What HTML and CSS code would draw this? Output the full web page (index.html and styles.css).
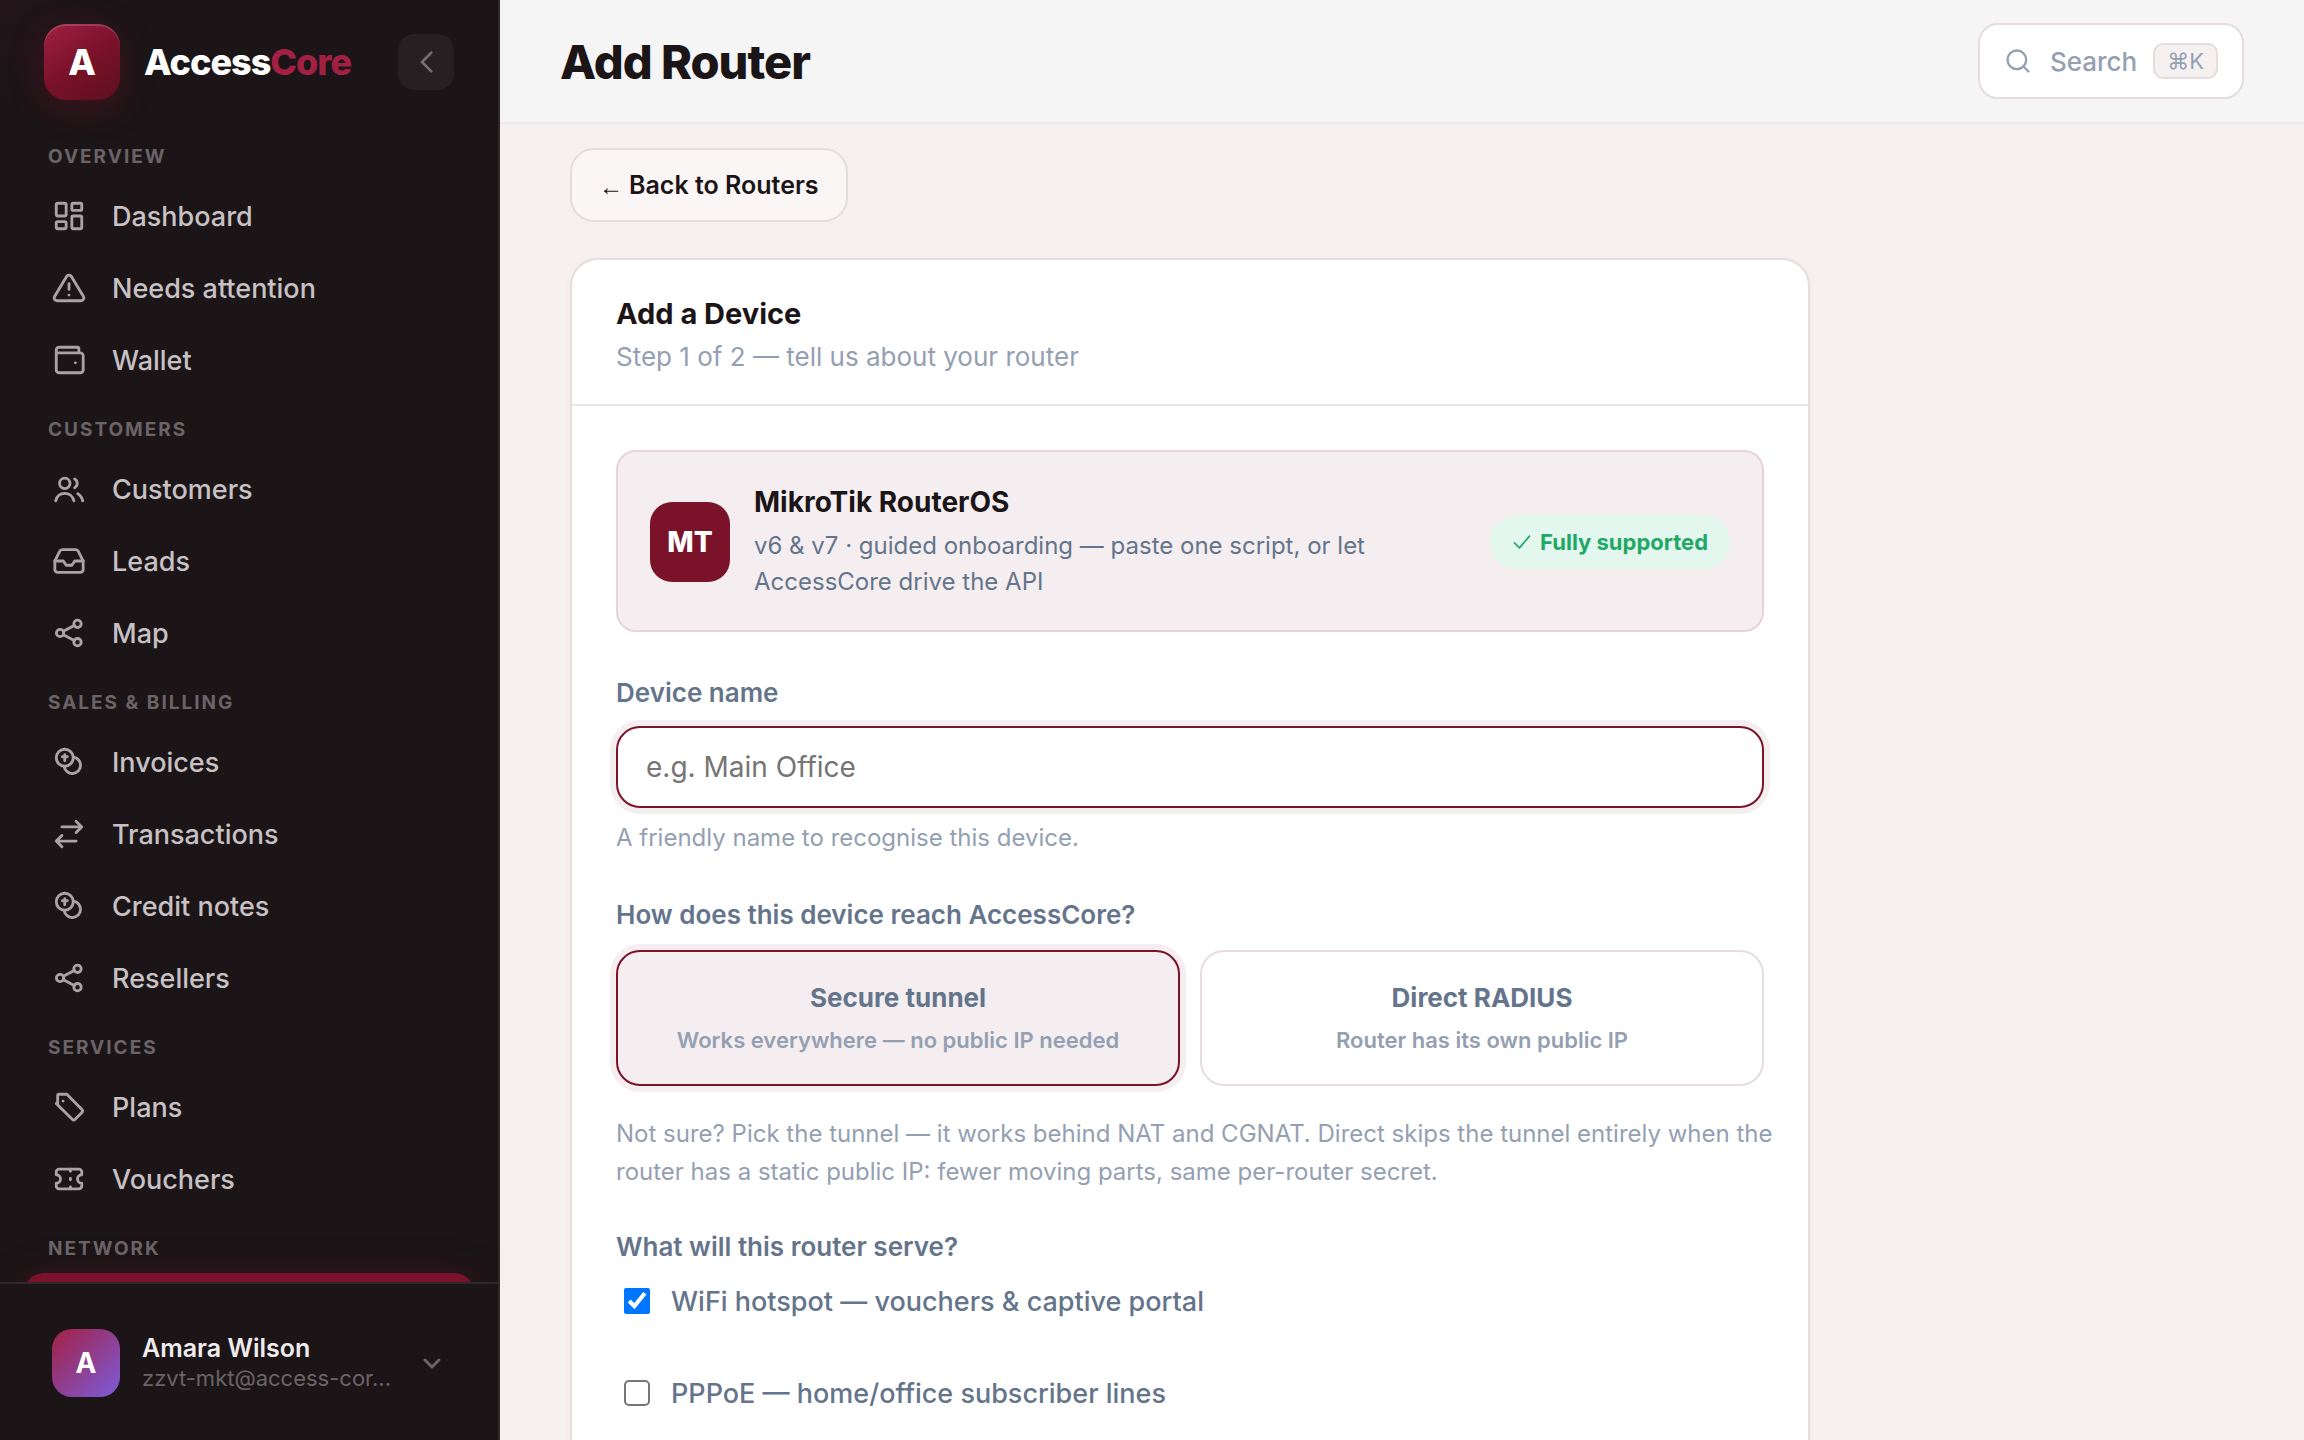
FILE: index.html
```html
<!DOCTYPE html>
<html lang="en">
<head>
    <meta charset="UTF-8">
    <meta name="viewport" content="width=device-width, initial-scale=1.0">
    <title>Add Router</title>
    <link rel="stylesheet" href="styles.css">
</head>
<body>
    <div class="app">
        <aside class="sidebar">
            <div class="brand">
                <div class="brand-logo">A</div>
                <div class="brand-name">Access<span>Core</span></div>
                <button type="button" class="collapse" aria-label="Collapse sidebar">
                    <svg class="icon" viewBox="0 0 24 24"><path d="M16 5l-7 7 7 7"/></svg>
                </button>
            </div>

            <nav class="nav">
                <div class="nav-label">Overview</div>
                <a href="#" class="nav-item">
                    <svg class="icon" viewBox="0 0 24 24"><rect x="3" y="3" width="7" height="9" rx="1"/><rect x="14" y="3" width="7" height="5" rx="1"/><rect x="14" y="12" width="7" height="9" rx="1"/><rect x="3" y="16" width="7" height="5" rx="1"/></svg>
                    Dashboard
                </a>
                <a href="#" class="nav-item">
                    <svg class="icon" viewBox="0 0 24 24"><path d="M10.3 3.9L1.8 18a2 2 0 0 0 1.7 3h17a2 2 0 0 0 1.7-3L13.7 3.9a2 2 0 0 0-3.4 0z"/><path d="M12 9v4M12 17h.01"/></svg>
                    Needs attention
                </a>
                <a href="#" class="nav-item">
                    <svg class="icon" viewBox="0 0 24 24"><path d="M19 7V4a1 1 0 0 0-1-1H5a2 2 0 0 0-2 2v14a2 2 0 0 0 2 2h15a2 2 0 0 0 2-2V9a2 2 0 0 0-2-2H3"/><path d="M16.5 14h.01"/></svg>
                    Wallet
                </a>

                <div class="nav-label">Customers</div>
                <a href="#" class="nav-item">
                    <svg class="icon" viewBox="0 0 24 24"><circle cx="9" cy="8" r="3.7"/><path d="M2.6 20.4c.8-3.4 3.4-5.3 6.4-5.3s5.7 1.9 6.5 5.3"/><path d="M16 4.9c2.4 1.3 2.4 4.9 0 6.2"/><path d="M18.2 15.3c1.9 1 3 2.8 3.5 5.1"/></svg>
                    Customers
                </a>
                <a href="#" class="nav-item">
                    <svg class="icon" viewBox="0 0 24 24"><path d="M22 12h-6l-2 3h-4l-2-3H2"/><path d="M5.5 5.1L2 12v6a2 2 0 0 0 2 2h16a2 2 0 0 0 2-2v-6l-3.5-6.9A2 2 0 0 0 16.8 4H7.2a2 2 0 0 0-1.7 1.1z"/></svg>
                    Leads
                </a>
                <a href="#" class="nav-item">
                    <svg class="icon" viewBox="0 0 24 24"><circle cx="18" cy="5.5" r="2.6"/><circle cx="5.7" cy="12" r="2.6"/><circle cx="18" cy="18.5" r="2.6"/><path d="M8 10.8l7.7-4.1M8 13.2l7.7 4.1"/></svg>
                    Map
                </a>

                <div class="nav-label">Sales &amp; Billing</div>
                <a href="#" class="nav-item">
                    <svg class="icon" viewBox="0 0 24 24"><circle cx="9" cy="9" r="6"/><path d="M15.1 8.6a5.8 5.8 0 1 1-6.5 6.6"/><path d="M7.3 8.3h3.5M9 6.8v4.4"/></svg>
                    Invoices
                </a>
                <a href="#" class="nav-item">
                    <svg class="icon" viewBox="0 0 24 24"><path d="M7 7h14M17 3l4 4-4 4M17 17H3M7 13l-4 4 4 4"/></svg>
                    Transactions
                </a>
                <a href="#" class="nav-item">
                    <svg class="icon" viewBox="0 0 24 24"><circle cx="9" cy="9" r="6"/><path d="M15.1 8.6a5.8 5.8 0 1 1-6.5 6.6"/><path d="M7.3 8.3h3.5M9 6.8v4.4"/></svg>
                    Credit notes
                </a>
                <a href="#" class="nav-item">
                    <svg class="icon" viewBox="0 0 24 24"><circle cx="18" cy="5.5" r="2.6"/><circle cx="5.7" cy="12" r="2.6"/><circle cx="18" cy="18.5" r="2.6"/><path d="M8 10.8l7.7-4.1M8 13.2l7.7 4.1"/></svg>
                    Resellers
                </a>

                <div class="nav-label">Services</div>
                <a href="#" class="nav-item">
                    <svg class="icon" viewBox="0 0 24 24"><path d="M4 9.5V4a1 1 0 0 1 1-1h5.5l10.6 10.8a1.5 1.5 0 0 1 0 2.1l-4.7 4.8a1.5 1.5 0 0 1-2.1 0L3 9.5"/><path d="M7.8 7.8h.01"/></svg>
                    Plans
                </a>
                <a href="#" class="nav-item">
                    <svg class="icon" viewBox="0 0 24 24"><path d="M3 9a3 3 0 0 1 0 6v2a2 2 0 0 0 2 2h14a2 2 0 0 0 2-2v-2a3 3 0 0 1 0-6V7a2 2 0 0 0-2-2H5a2 2 0 0 0-2 2z"/><path d="M13 5v1.5M13 11.5v1M13 17.5V19"/></svg>
                    Vouchers
                </a>

                <div class="nav-label">Network</div>
                <a href="#" class="nav-item active"></a>
            </nav>

            <div class="user">
                <div class="avatar">A</div>
                <div class="user-info">
                    <div class="user-name">Amara Wilson</div>
                    <div class="user-email">zzvt-mkt@access-cor...</div>
                </div>
                <svg class="icon chevron" viewBox="0 0 24 24"><path d="M5 9l7 7 7-7"/></svg>
            </div>
        </aside>

        <div class="main">
            <header class="topbar">
                <h1>Add Router</h1>
                <button type="button" class="search">
                    <svg class="icon" viewBox="0 0 24 24"><circle cx="11" cy="11" r="8"/><path d="M21 21l-4.3-4.3"/></svg>
                    <span>Search</span>
                    <kbd>⌘K</kbd>
                </button>
            </header>

            <main class="content">
                <a href="#" class="back"><span class="arrow">←</span> Back to Routers</a>

                <section class="card">
                    <div class="card-header">
                        <h2>Add a Device</h2>
                        <p>Step 1 of 2 — tell us about your router</p>
                    </div>

                    <form class="card-body">
                        <div class="vendor">
                            <div class="vendor-logo">MT</div>
                            <div class="vendor-info">
                                <h3>MikroTik RouterOS</h3>
                                <p>v6 &amp; v7 · guided onboarding — paste one script, or let AccessCore drive the API</p>
                            </div>
                            <div class="badge">
                                <svg class="icon" viewBox="0 0 24 24"><path d="M3 13l6 6L21 5"/></svg>
                                Fully supported
                            </div>
                        </div>

                        <label class="label" for="deviceName">Device name</label>
                        <input type="text" class="input" id="deviceName" name="deviceName" placeholder="e.g. Main Office">
                        <p class="help">A friendly name to recognise this device.</p>

                        <div class="label">How does this device reach AccessCore?</div>
                        <div class="options">
                            <button type="button" class="option selected" aria-pressed="true">
                                <span class="option-title">Secure tunnel</span>
                                <span class="option-text">Works everywhere — no public IP needed</span>
                            </button>
                            <button type="button" class="option" aria-pressed="false">
                                <span class="option-title">Direct RADIUS</span>
                                <span class="option-text">Router has its own public IP</span>
                            </button>
                        </div>
                        <p class="help help-options">Not sure? Pick the tunnel — it works behind NAT and CGNAT. Direct skips the tunnel entirely when the router has a static public IP: fewer moving parts, same per-router secret.</p>

                        <div class="label">What will this router serve?</div>
                        <label class="check">
                            <input type="checkbox" name="hotspot" checked>
                            WiFi hotspot — vouchers &amp; captive portal
                        </label>
                        <label class="check">
                            <input type="checkbox" name="pppoe">
                            PPPoE — home/office subscriber lines
                        </label>
                    </form>
                </section>
            </main>
        </div>
    </div>
</body>
</html>
```

FILE: styles.css
```css
* {
    margin: 0;
    padding: 0;
    box-sizing: border-box;
}

body {
    font-family: Inter, sans-serif;
    background-color: #f6f1f0;
    color: #1b1517;
}

button, input {
    font-family: inherit;
}

button {
    cursor: pointer;
}

a {
    text-decoration: none;
    color: inherit;
}

.icon {
    fill: none;
    stroke: currentColor;
    stroke-width: 2;
    stroke-linecap: round;
    stroke-linejoin: round;
    flex-shrink: 0;
}

.app {
    display: flex;
    height: 100vh;
    overflow: hidden;
}

/* Sidebar */
.sidebar {
    width: 500px;
    flex-shrink: 0;
    display: flex;
    flex-direction: column;
    background: radial-gradient(circle at 0 0, #23141a, #1b1517 120px);
    border-right: 2px solid #2e282a;
}

.brand {
    display: flex;
    align-items: center;
    padding: 24px 44px 22px;
}

.brand-logo {
    width: 76px;
    height: 76px;
    border-radius: 22px;
    display: flex;
    align-items: center;
    justify-content: center;
    color: #fff;
    font-size: 36px;
    font-weight: 800;
    background: linear-gradient(145deg, #9f2042, #7a1229 50%, #5e0f20);
    box-shadow: 0 8px 32px rgba(122, 18, 41, 0.4), inset 0 2px 0 rgba(255, 255, 255, 0.16);
}

.brand-name {
    flex: 1;
    margin-left: 24px;
    color: #fff;
    font-size: 36px;
    font-weight: 800;
    letter-spacing: -1px;
}

.brand-name span {
    color: #a32043;
}

.collapse {
    width: 56px;
    height: 56px;
    border: none;
    border-radius: 16px;
    background-color: #271f22;
    color: #766e71;
    display: flex;
    align-items: center;
    justify-content: center;
}

.collapse .icon {
    width: 32px;
    height: 32px;
}

.nav {
    flex: 1;
    min-height: 0;
    overflow: hidden;
    padding: 0 24px;
}

.nav-label {
    margin: 24px 0 13px;
    padding-left: 24px;
    line-height: 22px;
    color: #6b6467;
    font-size: 19px;
    font-weight: 700;
    letter-spacing: 2px;
    text-transform: uppercase;
}

.nav-item {
    height: 70px;
    margin-bottom: 2px;
    padding-left: 28px;
    display: flex;
    align-items: center;
    gap: 26px;
    border-radius: 20px;
    color: #c8c1c4;
    font-size: 27px;
    font-weight: 500;
}

.nav-item .icon {
    width: 34px;
    height: 34px;
    color: #aaa3a6;
}

.nav-item.active {
    background-color: #7a1229;
    box-shadow: 0 8px 40px rgba(122, 18, 41, 0.4);
}

.user {
    position: relative;
    height: 158px;
    flex-shrink: 0;
    display: flex;
    align-items: center;
    padding: 2px 54px 0 52px;
    background-color: #1b1517;
    border-top: 2px solid #2e282a;
}

.avatar {
    width: 68px;
    height: 68px;
    border-radius: 20px;
    display: flex;
    align-items: center;
    justify-content: center;
    color: #fff;
    font-size: 28px;
    font-weight: 700;
    background: linear-gradient(135deg, #a32043, #7c5cdb);
}

.user-info {
    flex: 1;
    margin-left: 22px;
}

.user-name {
    line-height: 30px;
    color: #f0ebec;
    font-size: 25px;
    font-weight: 600;
}

.user-email {
    line-height: 30px;
    color: #6b6467;
    font-size: 22px;
}

.chevron {
    width: 24px;
    height: 24px;
    stroke-width: 3;
    color: #6b6467;
}

/* Top bar */
.main {
    flex: 1;
    min-width: 0;
    display: flex;
    flex-direction: column;
}

.topbar {
    height: 124px;
    flex-shrink: 0;
    display: flex;
    align-items: center;
    justify-content: space-between;
    padding: 0 60px;
    background-color: #f5f5f5;
    border-bottom: 2px solid #efeae9;
}

h1 {
    font-size: 47px;
    font-weight: 800;
    letter-spacing: -1px;
}

.search {
    height: 76px;
    display: flex;
    align-items: center;
    padding: 0 24px;
    background-color: #fff;
    border: 2px solid #e6dcde;
    border-radius: 20px;
    color: #94a0b2;
    font-size: 26px;
    font-weight: 500;
}

.search .icon {
    width: 28px;
    height: 28px;
    margin-right: 18px;
}

kbd {
    height: 36px;
    margin-left: 16px;
    padding: 0 12px;
    line-height: 32px;
    background-color: #f6f1f1;
    border: 2px solid #e6dcde;
    border-radius: 10px;
    font-family: inherit;
    font-size: 22px;
    font-weight: 400;
}

/* Content */
.content {
    flex: 1;
    min-height: 0;
    overflow: hidden;
    padding: 24px 70px 0;
}

.back {
    display: inline-flex;
    align-items: center;
    gap: 6px;
    height: 74px;
    padding: 0 27px;
    margin-bottom: 36px;
    background-color: #faf6f6;
    border: 2px solid #e4dddd;
    border-radius: 24px;
    font-size: 25px;
    font-weight: 600;
}

.arrow {
    padding-top: 4px;
    font-family: "Liberation Sans", sans-serif;
    font-size: 24px;
}

.card {
    max-width: 1240px;
    background-color: #fff;
    border: 2px solid #e6dddd;
    border-radius: 28px;
    box-shadow: 0 2px 6px rgba(27, 21, 23, 0.04);
}

.card-header {
    padding: 35px 44px 27px;
    border-bottom: 2px solid #ebe5e6;
}

h2 {
    line-height: 38px;
    font-size: 29px;
    font-weight: 700;
}

.card-header p {
    margin-top: 4px;
    line-height: 40px;
    color: #94a0b2;
    font-size: 26px;
}

.card-body {
    padding: 44px 44px 70px;
}

.vendor {
    display: flex;
    align-items: center;
    gap: 24px;
    padding: 32px 32px 30px;
    background-color: #f5eef0;
    border: 2px solid #e8d3d9;
    border-radius: 20px;
    margin-bottom: 41px;
}

.vendor-logo {
    width: 80px;
    height: 80px;
    flex-shrink: 0;
    border-radius: 22px;
    display: flex;
    align-items: center;
    justify-content: center;
    background-color: #7a1229;
    color: #fff;
    font-size: 28px;
    font-weight: 800;
}

.vendor-info {
    flex: 1;
    padding-right: 90px;
}

h3 {
    line-height: 36px;
    margin-bottom: 8px;
    font-size: 28px;
    font-weight: 700;
}

.vendor-info p {
    line-height: 36px;
    color: #64748b;
    font-size: 24px;
}

.badge {
    display: flex;
    align-items: center;
    flex-shrink: 0;
    gap: 8px;
    height: 54px;
    padding: 0 22px;
    border-radius: 27px;
    background-color: #e4f7ee;
    color: #22a866;
    font-size: 22px;
    font-weight: 700;
}

.badge .icon {
    width: 20px;
    height: 20px;
}

.label {
    display: block;
    line-height: 40px;
    color: #64748b;
    font-size: 26px;
    font-weight: 600;
}

.input {
    display: block;
    width: 100%;
    height: 82px;
    margin: 13px 0 11px;
    padding: 0 28px;
    border: 2px solid #7a1229;
    border-radius: 24px;
    box-shadow: 0 0 0 6px #f5eef0;
    color: #1b1517;
    font-size: 28px;
}

.input::placeholder {
    color: #757575;
}

.help {
    line-height: 38px;
    margin-bottom: 38px;
    color: #94a0b2;
    font-size: 24px;
}

.help-options {
    margin-right: -12px;
    margin-bottom: 36px;
}

.options {
    display: grid;
    grid-template-columns: 1fr 1fr;
    gap: 20px;
    margin: 15px 0 29px;
}

.option {
    height: 136px;
    display: flex;
    flex-direction: column;
    align-items: center;
    justify-content: center;
    gap: 6px;
    background-color: #fff;
    border: 2px solid #e6dddd;
    border-radius: 24px;
}

.option.selected {
    background-color: #f5eef0;
    border-color: #7a1229;
    box-shadow: 0 0 0 6px #f5eef0;
}

.option-title {
    line-height: 38px;
    color: #64748b;
    font-size: 26px;
    font-weight: 700;
}

.option-text {
    line-height: 34px;
    color: #94a0b2;
    font-size: 22px;
    font-weight: 600;
}

.check {
    display: flex;
    align-items: center;
    gap: 21px;
    height: 40px;
    margin: 14px 0 52px 8px;
    color: #64748b;
    font-size: 27px;
    font-weight: 500;
}

.check input {
    width: 26px;
    height: 26px;
}

.check input:not(:checked) {
    appearance: none;
    background-color: #fff;
    border: 2px solid #767676;
    border-radius: 5px;
}
```
